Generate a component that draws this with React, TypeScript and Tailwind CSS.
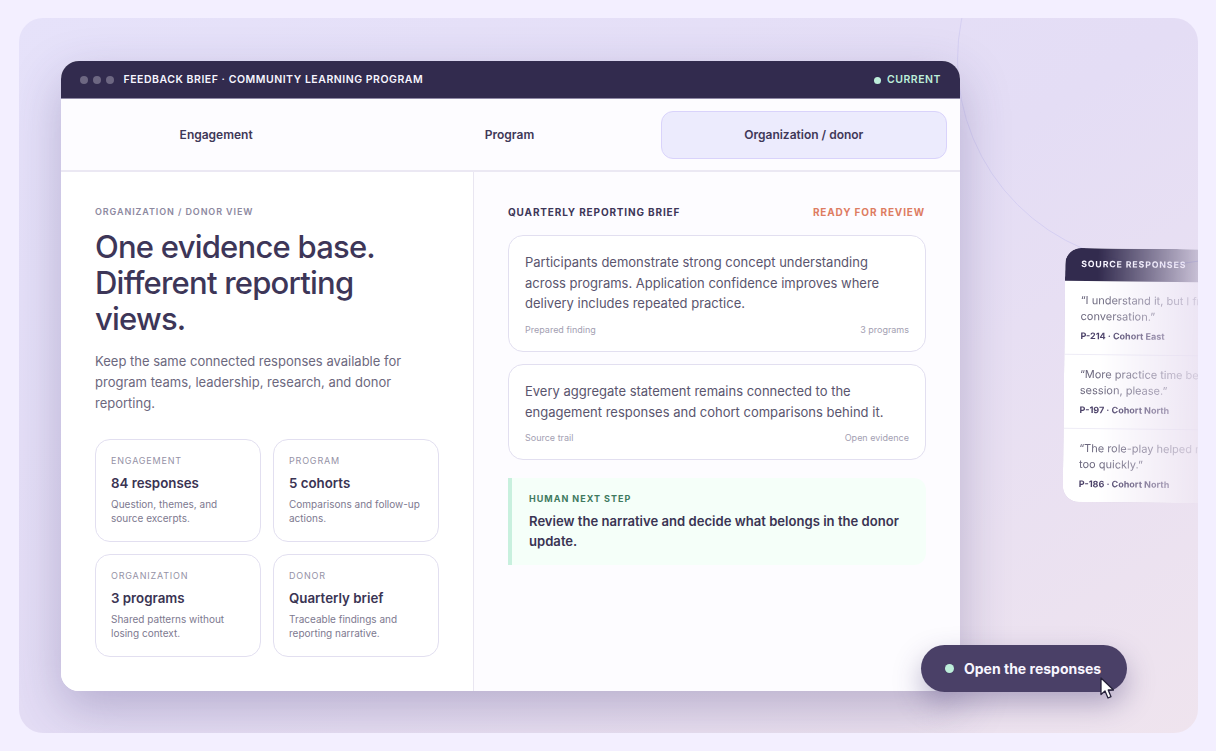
const sans = "font-['Inter',sans-serif]";

const stats = [
  { label: 'ENGAGEMENT', value: '84 responses', note: ['Question, themes, and', 'source excerpts.'] },
  { label: 'PROGRAM', value: '5 cohorts', note: ['Comparisons and follow-up', 'actions.'] },
  { label: 'ORGANIZATION', value: '3 programs', note: ['Shared patterns without', 'losing context.'] },
  { label: 'DONOR', value: 'Quarterly brief', note: ['Traceable findings and', 'reporting narrative.'] },
];

const quotes = [
  { text: ['“I understand it, but I froze in a', 'conversation.”'], who: 'P-214 · Cohort East' },
  { text: ['“More practice time before the', 'session, please.”'], who: 'P-197 · Cohort North' },
  { text: ['“The role-play helped me but went', 'too quickly.”'], who: 'P-186 · Cohort North' },
];

function StatCard({ label, value, note }: { label: string; value: string; note: string[] }) {
  return (
    <div className="h-[103px] rounded-[15px] border border-[#e2dff0] bg-white px-[15px] pt-[14px]">
      <div className="text-[9px] leading-[14px] tracking-[0.09em] text-[#9592a6]">{label}</div>
      <div className="mt-[5px] text-[13.3px] leading-[20px] font-semibold text-[#3a3453]">{value}</div>
      <div className="mt-[4px] text-[10px] leading-[14px] whitespace-nowrap text-[#7d798f]">
        {note.map((line) => (
          <div key={line}>{line}</div>
        ))}
      </div>
    </div>
  );
}

function BriefCard({ lines, left, right }: { lines: string[]; left: string; right: string }) {
  return (
    <div className="rounded-[15px] border border-[#e2dff0] bg-white px-4 pt-[16px] pb-[14px]">
      <div className="text-[13px] leading-[20.5px] text-[#5a556e]">
        {lines.map((line) => (
          <div key={line}>{line}</div>
        ))}
      </div>
      <div className="mt-[9px] flex justify-between text-[9px] leading-[14px] text-[#a3a0b2]">
        <span>{left}</span>
        <span>{right}</span>
      </div>
    </div>
  );
}

export default function App() {
  return (
    <div className={`h-[751px] w-[1216px] overflow-hidden bg-[#f3efff] pt-[18px] pl-[19px] ${sans}`}>
      <div className="relative h-[715px] w-[1179px] overflow-hidden rounded-[24px] bg-gradient-to-br from-[#e6e2fa] via-[#e4ddf5] to-[#efe4ee] pt-[43px] pl-[42px]">
        {/* big ring behind the window */}
        <div className="absolute top-[-163px] left-[938px] h-[410px] w-[410px] rounded-full border border-[#d5cff2]" />

        {/* main window */}
        <div className="relative h-[630px] w-[899px] overflow-hidden rounded-[18px] bg-white shadow-[0_18px_50px_rgba(60,50,110,0.28)]">
          <div className="flex h-[38px] items-center justify-between border-b border-[#8f89a6] bg-[#322b4e] px-[19px] pt-px">
            <div className="flex items-center gap-[5px]">
              <span className="h-2 w-2 rounded-full bg-[#6d6782]" />
              <span className="h-2 w-2 rounded-full bg-[#6d6782]" />
              <span className="h-2 w-2 rounded-full bg-[#6d6782]" />
              <span className="ml-[4.5px] text-[10.5px] font-semibold tracking-[0.05em] text-[#f7f5ff]">
                FEEDBACK BRIEF · COMMUNITY LEARNING PROGRAM
              </span>
            </div>
            <div className="flex items-center gap-[6px] text-[10.5px] font-semibold tracking-[0.05em] text-[#bdeeda]">
              <span className="h-[7px] w-[7px] rounded-full bg-[#bdeeda]" />
              CURRENT
            </div>
          </div>

          <div className="grid h-[73px] grid-cols-3 items-center gap-[7px] border-b-2 border-[#ebe8f3] bg-[#fdfcff] px-[13px] text-[12px] font-semibold text-[#3f3858]">
            <div className="pt-px pr-[2px] text-center">Engagement</div>
            <div className="pt-px pr-[2px] text-center">Program</div>
            <div className="flex h-12 items-center justify-center rounded-[12px] border-[1.5px] border-[#d9d3fb] bg-[#ecebfd] pt-px">
              Organization / donor
            </div>
          </div>

          <div className="flex h-[519px]">
            <div className="w-[413px] shrink-0 border-r border-[#e9e6f1] bg-white pt-[34px] pr-[34px] pl-[34px]">
              <div className="text-[9px] leading-[12px] font-semibold tracking-[0.1em] text-[#8d899f]">
                ORGANIZATION / DONOR VIEW
              </div>
              <h1 className="mt-[11px] text-[31px] leading-[36px] font-medium tracking-[-0.025em] text-[#3d3658]">
                One evidence base.
                <br />
                Different reporting
                <br />
                views.
              </h1>
              <p className="mt-[14px] text-[13px] leading-[21px] text-[#6c687e]">
                Keep the same connected responses available for
                <br />
                program teams, leadership, research, and donor
                <br />
                reporting.
              </p>
              <div className="mt-[25px] grid grid-cols-2 gap-3">
                {stats.map((s) => (
                  <StatCard key={s.label} {...s} />
                ))}
              </div>
            </div>

            <div className="flex-1 bg-[#fdfcff] pt-[34px] pr-[34px] pl-[34px]">
              <div className="flex justify-between pr-px text-[10px] leading-[12px] font-bold tracking-[0.085em]">
                <span className="text-[#3d3658]">QUARTERLY REPORTING BRIEF</span>
                <span className="text-[#dd7c62]">READY FOR REVIEW</span>
              </div>
              <div className="mt-[17px] flex flex-col gap-[12.5px]">
                <BriefCard
                  lines={[
                    'Participants demonstrate strong concept understanding',
                    'across programs. Application confidence improves where',
                    'delivery includes repeated practice.',
                  ]}
                  left="Prepared finding"
                  right="3 programs"
                />
                <BriefCard
                  lines={[
                    'Every aggregate statement remains connected to the',
                    'engagement responses and cohort comparisons behind it.',
                  ]}
                  left="Source trail"
                  right="Open evidence"
                />
              </div>
              <div className="mt-[18.3px] h-[87px] rounded-r-[12px] border-l-4 border-[#c8f0de] bg-[#f5fff9] pt-[15px] pl-[17px]">
                <div className="text-[9px] leading-[12px] font-bold tracking-[0.11em] text-[#3f7a5f]">HUMAN NEXT STEP</div>
                <div className="mt-[6px] text-[13.1px] leading-[20px] font-semibold text-[#3a3453]">
                  Review the narrative and decide what belongs in the donor
                  <br />
                  update.
                </div>
              </div>
            </div>
          </div>
        </div>

        {/* floating source card, fades out to the right */}
        <div className="absolute top-[231px] left-[1045.2px] h-[254px] w-[220px] rotate-[0.6deg] overflow-hidden rounded-[16px] bg-white shadow-[0_14px_34px_rgba(60,50,110,0.18)] [mask-image:linear-gradient(to_right,black_15%,rgba(0,0,0,0.15)_62%)]">
          <div className="flex h-[33px] items-center bg-[#322b4e] pl-4 text-[8.75px] font-bold tracking-[0.1em] text-[#f7f5ff]">
            SOURCE RESPONSES
          </div>
          {quotes.map((q) => (
            <div key={q.who} className="h-[74px] border-b border-[#eeecf6] px-4 pt-[10.5px] last:border-b-0">
              <div className="text-[11px] leading-[16px] whitespace-nowrap text-[#6c687e]">
                {q.text.map((line) => (
                  <div key={line}>{line}</div>
                ))}
              </div>
              <div className="mt-[6px] text-[9px] leading-[12px] font-bold text-[#4a4067]">{q.who}</div>
            </div>
          ))}
        </div>

        {/* call to action with pointer */}
        <div className="absolute top-[627px] left-[902px] flex h-[47px] w-[206px] items-center gap-[10px] rounded-full bg-[#4a4067] pl-6 text-[14px] font-bold text-[#f8f6ff] shadow-[0_12px_28px_rgba(60,50,110,0.35)]">
          <span className="h-[9px] w-[9px] rounded-full bg-[#bdeeda]" />
          Open the responses
        </div>
        <svg className="absolute top-[659px] left-[1080px]" width="18" height="24" viewBox="0 0 18 24">
          <path d="M2 1 L2 17.5 L6 14 L9 21 L12 19.7 L9.2 13 L14.5 13 Z" fill="#fff" stroke="#26213a" strokeWidth="1.3" strokeLinejoin="round" />
        </svg>
      </div>
    </div>
  );
}
